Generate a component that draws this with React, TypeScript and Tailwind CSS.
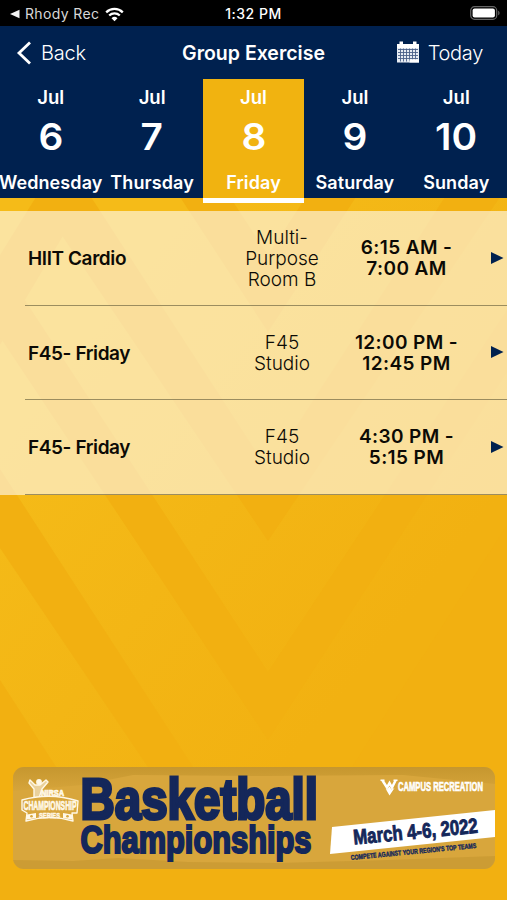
import { ReactNode } from "react";

interface Day {
  month: string;
  date: string;
  name: string;
  active?: boolean;
}

interface GroupClass {
  name: string;
  room: string[];
  time: string[];
}

const days: Day[] = [
  { month: "Jul", date: "6", name: "Wednesday" },
  { month: "Jul", date: "7", name: "Thursday" },
  { month: "Jul", date: "8", name: "Friday", active: true },
  { month: "Jul", date: "9", name: "Saturday" },
  { month: "Jul", date: "10", name: "Sunday" },
];

const classes: GroupClass[] = [
  {
    name: "HIIT Cardio",
    room: ["Multi-", "Purpose", "Room B"],
    time: ["6:15 AM -", "7:00 AM"],
  },
  {
    name: "F45- Friday",
    room: ["F45", "Studio"],
    time: ["12:00 PM -", "12:45 PM"],
  },
  {
    name: "F45- Friday",
    room: ["F45", "Studio"],
    time: ["4:30 PM -", "5:15 PM"],
  },
];

function Backdrop() {
  return (
    <svg
      className="absolute inset-0 h-full w-full"
      viewBox="0 0 507 900"
      preserveAspectRatio="none"
    >
      <defs>
        <linearGradient id="gold" gradientUnits="userSpaceOnUse" x1="40" y1="400" x2="370" y2="660">
          <stop offset="0" stopColor="#f5bb18" />
          <stop offset="0.5" stopColor="#f3b615" />
          <stop offset="1" stopColor="#f2b111" />
        </linearGradient>
      </defs>
      <rect width="507" height="900" fill="url(#gold)" />
      <g fill="#f2b011">
        <path d="M180 197h50l38 58 38-58h50l-88 135z" />
        <path d="M36 197h55L268 470 445 197h55L268 541z" />
        <path d="M36 197h50L25 300 0 345V255z" />
        <path d="M0 262L268 672 507 310V372L268 740 0 337z" />
        <path d="M0 469L195 770V900H230L150 770 0 548z" />
        <path d="M0 680L58 770V900H0z" />
        <path d="M507 525V900H0V770H350z" />
      </g>
    </svg>
  );
}

function StatusBar() {
  return (
    <div className="grid h-[26px] shrink-0 grid-cols-3 items-center bg-black text-white">
      <div className="flex items-center pl-2.5 pt-0.5">
        <svg width="10" height="10" viewBox="0 0 10 10" fill="#f4f4f4">
          <path d="M0 5L9.500.8v8.400z" />
        </svg>
        <span className="ml-[5px] whitespace-nowrap text-[14px] leading-5 tracking-[0.35px] text-[#d8d8d8]">
          Rhody Rec
        </span>
        <svg className="ml-1.5 shrink-0" width="19" height="15" viewBox="0 0 19 15" fill="none">
          <path d="M1.200 5.300a12 12 0 0 1 16.600 0" stroke="white" strokeWidth="2.300" />
          <path d="M4.200 8.500a7.700 7.700 0 0 1 10.600 0" stroke="white" strokeWidth="2.300" />
          <path d="M6.500 11.200a4.400 4.400 0 0 1 6 0L9.500 14.300z" fill="white" />
        </svg>
      </div>
      <span className="pt-0.5 text-center text-[14px] font-medium leading-5 tracking-[0.5px]">
        1:32 PM
      </span>
      <div className="flex justify-end pr-[6px]">
        <svg width="31" height="14" viewBox="0 0 31 14" fill="none">
          <rect x="0.700" y="0.700" width="26" height="12.600" rx="3.800" stroke="#666" strokeWidth="1.200" />
          <rect x="2.600" y="2.500" width="22.300" height="9" rx="2" fill="white" />
          <path d="M28.200 4.700c1.800.7 1.800 3.900 0 4.600z" fill="#666" />
        </svg>
      </div>
    </div>
  );
}

function CalendarIcon() {
  return (
    <svg width="24" height="23" viewBox="0 0 24 23">
      <path d="M1 4h22v17.500H1z" fill="#e6ebf2" />
      <path d="M3.500 0.500h3.500v4H3.500zM17 0.500h3.500v4H17z" fill="white" />
      <path d="M1 3h22v4H1z" fill="white" />
      <path
        d="M2 8.500h20M2 11.500h20M2 14.500h20M2 17.500h20M4.500 7.500v13M7.500 7.500v13M10.500 7.500v13M13.500 7.500v13M16.500 7.500v11M19.500 7.500v11"
        stroke="#4a6088"
        strokeWidth="0.900"
      />
      <path d="M13.500 18.500h9.500v3h-9.500z" fill="white" />
    </svg>
  );
}

function NavBar() {
  return (
    <div className="flex h-[53px] shrink-0 items-center justify-between pl-4 pr-6 text-[20px] text-white">
      <div className="flex w-[150px] items-center font-light">
        <svg width="16" height="24" viewBox="0 0 16 24" fill="none">
          <path d="M14 1.500L3 12l11 10.500" stroke="white" strokeWidth="2.800" />
        </svg>
        <span className="ml-[9px] tracking-[-0.2px]">Back</span>
      </div>
      <span className="whitespace-nowrap pt-0.5 text-[19.500px] font-semibold">
        Group Exercise
      </span>
      <div className="flex w-[142px] items-center justify-end font-light">
        <CalendarIcon />
        <span className="ml-2 tracking-[-0.300px]">Today</span>
      </div>
    </div>
  );
}

function DayTab({ month, date, name, active }: Day) {
  return (
    <div
      className={
        active
          ? "-mb-[5px] flex h-[124px] flex-col items-center border-b-[5px] border-white bg-[#f1b310]"
          : "flex h-[119px] flex-col items-center"
      }
    >
      <span className="mt-[7px] text-[18.500px] font-semibold leading-[22px]">{month}</span>
      <span className="mt-[9px] scale-x-105 text-[37px] font-semibold leading-[40px]">{date}</span>
      <span className="mt-[15px] whitespace-nowrap text-[18px] font-semibold leading-[22px] tracking-[0.1px]">
        {name}
      </span>
    </div>
  );
}

function Lines({ items }: { items: string[] }) {
  return (
    <>
      {items.map((item) => (
        <span key={item} className="block whitespace-nowrap">
          {item}
        </span>
      ))}
    </>
  );
}

function ClassRow({ name, room, time }: GroupClass) {
  return (
    <div className="bg-[#fffef8]/60 pl-[25px]">
      <div className="flex h-[94.500px] items-center border-b-[1.500px] border-[#5b5536]/60 pl-[3px] text-[19px] leading-[21px] text-[#0c0a05]">
        <div className="w-[204px] pt-0.5 font-semibold tracking-[-0.400px]">{name}</div>
        <div className="w-[100px] pt-px text-center font-light">
          <Lines items={room} />
        </div>
        <div className="w-[149px] pt-px text-center font-semibold tracking-[0.400px]">
          <Lines items={time} />
        </div>
        <svg className="ml-[9px]" width="14" height="14" viewBox="0 0 14 14" fill="#00214f">
          <path d="M1 1l12.500 6L1 13z" />
        </svg>
      </div>
    </div>
  );
}

interface BannerTextProps {
  x: number;
  y: number;
  size: number;
  width: number;
  stroke?: number;
  color?: string;
  children: ReactNode;
}

function BannerText({ x, y, size, width, stroke = 0, color = "#14275a", children }: BannerTextProps) {
  return (
    <text
      x={x}
      y={y}
      fontSize={size}
      fontWeight="700"
      textLength={width}
      lengthAdjust="spacingAndGlyphs"
      fill={color}
      stroke={color}
      strokeWidth={stroke}
    >
      {children}
    </text>
  );
}

function Banner() {
  return (
    <svg
      className="mx-[13px] mb-[31px] mt-auto shrink-0 font-['Liberation_Sans_Narrow','Liberation_Sans',sans-serif]"
      width="482"
      height="102"
      viewBox="0 0 482 102"
    >
      <defs>
        <clipPath id="card">
          <rect width="482" height="102" rx="11" />
        </clipPath>
        <linearGradient id="top" x1="0" y1="0" x2="0" y2="1">
          <stop offset="0" stopColor="#c6972f" />
          <stop offset="1" stopColor="#c6972f" stopOpacity="0.1" />
        </linearGradient>
      </defs>
      <g clipPath="url(#card)">
        <rect width="482" height="102" fill="#d8a63c" />
        <path d="M0 0h482v17L390 8 250 9 120 8 70 18 0 24z" fill="url(#top)" />
        <path d="M0 93l60 1 45-3 70 4 90 1 110-3 107-4v13H0z" fill="#c99a32" opacity="0.800" />

        {/* NIRSA badge */}
        <g fill="none" stroke="#fff8e6" strokeWidth="1.400" strokeLinejoin="round">
          <path d="M17 13l5 5 5 0 6-5 2 2-6 7-3 9-5 1 0-10-5-6z" fill="#ead19b" />
          <circle cx="26" cy="15" r="2.200" fill="#fff8e6" />
          <path d="M9 33Q37 25 65 34l-1 12-5 0 1 8Q37 47 13 54l1-8-5-3z" fill="#d8a63c" />
        </g>
        <BannerText x={28} y={28.5} size={8.5} width={23} stroke={0.7} color="#fff8e6">NIRSA</BannerText>
        <BannerText x={10.5} y={42.5} size={13} width={53} stroke={0.7} color="#fff8e6">CHAMPIONSHIP</BannerText>
        <BannerText x={26} y={50.5} size={8} width={21} stroke={0.5} color="#fff8e6">SERIES</BannerText>
        <path d="M14 47.500l9-1.500v5l-9 1.500zM50 46l9 1.500v5L50 51z" fill="#fff8e6" />
        <circle cx="18.500" cy="49.300" r="1.300" fill="#d8a63c" />
        <circle cx="54.500" cy="49.300" r="1.300" fill="#d8a63c" />

        <BannerText x={67.5} y={52} size={56.5} width={237.5} stroke={3.2}>Basketball</BannerText>
        <BannerText x={67.5} y={86} size={38.5} width={231} stroke={2.2}>Championships</BannerText>

        {/* WV mark */}
        <g fill="none" stroke="white">
          <path d="M369.500 13.500l4.500 7 2.500-4.500 2.500 4.500 3.500-7" strokeWidth="2.500" />
          <path d="M367.500 13.200h4M380.500 13.200h4" strokeWidth="1.600" />
        </g>
        <path d="M372.500 21.500l1.500 1 2.500-3 2 3 3-1.500-5 7.500z" fill="white" />
        <BannerText x={385} y={23.5} size={12} width={85} stroke={0.6} color="white">
          CAMPUS RECREATION
        </BannerText>

        <path d="M319 60l163-17v27l-165 17z" fill="white" />
        <g transform="rotate(-5.500 342 78)">
          <BannerText x={341} y={77.5} size={21} width={125} stroke={0.9}>March 4-6, 2022</BannerText>
        </g>
        <g transform="rotate(-5.500 338 93)">
          <BannerText x={338} y={93} size={7} width={126} stroke={0.4}>
            COMPETE AGAINST YOUR REGION'S TOP TEAMS
          </BannerText>
        </g>
      </g>
    </svg>
  );
}

function App() {
  return (
    <div className="relative h-[900px] w-[507px] overflow-hidden font-['Inter','Liberation_Sans',sans-serif]">
      <Backdrop />
      <div className="relative flex h-full flex-col">
        <StatusBar />
        <div className="bg-[#00214f]">
          <NavBar />
          <div className="grid grid-cols-5 text-white">
            {days.map((day) => (
              <DayTab key={day.date} {...day} />
            ))}
          </div>
        </div>
        <div className="mt-[13px]">
          {classes.map((item, index) => (
            <ClassRow key={index} {...item} />
          ))}
        </div>
        <Banner />
      </div>
    </div>
  );
}

export default App;
